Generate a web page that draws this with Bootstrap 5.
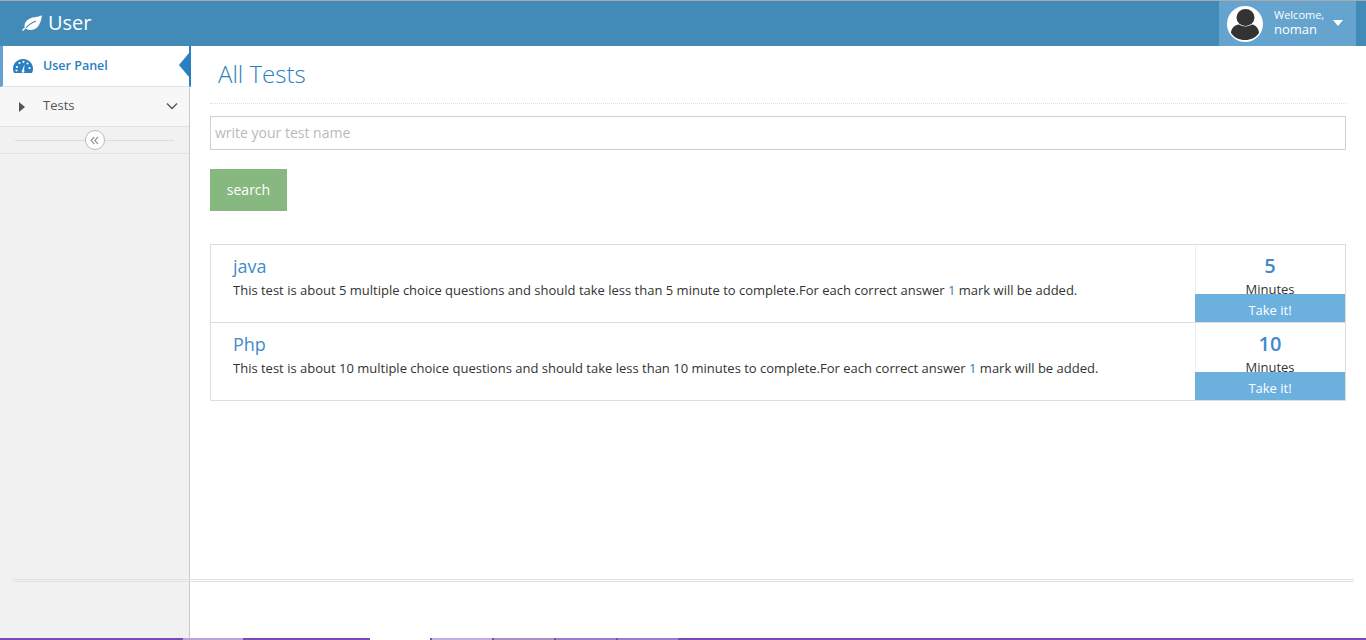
<!DOCTYPE html>
<html lang="en">
<head>
<meta charset="utf-8">
<title>User</title>
<link rel="stylesheet" href="https://cdn.jsdelivr.net/npm/bootstrap@5.3.0/dist/css/bootstrap.min.css">
<style>
html,body{height:100%;overflow:hidden}
body{font-family:"Open Sans","Noto Sans",sans-serif;font-size:13px;color:#333;background:#fff}
.shell{height:640px;position:relative}
.topline{height:1px;background:#aaa}
.hdr{height:45px;background:#428bb9;color:#fff}
.brand-t{font-size:20px;line-height:1;margin-left:6px;margin-top:-2px}
.brand-ic{margin-left:22px;margin-top:-2px}
.usr{width:137px;height:45px;background:#64a4cf;margin-right:10px;padding-left:8px}
.usr-av{width:36px;height:36px;border-radius:50%;background:#fff;flex:none}
.usr-w{font-size:11px;line-height:13px}
.usr-n{font-size:13px;line-height:15px;margin-top:1px}
.usr-txt{margin-left:11px;margin-top:-3px;width:60px}
.caretd{width:0;height:0;border-left:5.5px solid transparent;border-right:5.5px solid transparent;border-top:6px solid #fff;margin-left:-1px;margin-top:-2px}
.midrow{height:592px}
.side{width:190px;flex:none;background:#f1f1f1;border-right:1px solid #c9c9c9}
.sitem{height:40px;border-bottom:1px solid #e2e2e2;font-size:13px}
.sitem.on{height:41px;background:#fff;border-left:3px solid #65a0d0;color:#2a7fc0;font-weight:600;position:relative;font-size:12.5px;margin-right:-2px;border-right:2px solid #2a7fc0}
.sitem.on::after{content:"";position:absolute;right:0;top:7px;border-top:12px solid transparent;border-bottom:12px solid transparent;border-right:10px solid #2a7fc0}
.sitem.tst{background:#f7f7f7;color:#555}
.tst-lbl{padding-bottom:2px}
.sic{width:20px;margin-right:10px;flex:none}
.sic-g{margin-left:10px}
.sic-t{margin-left:13px}
.chev{margin-right:11px;margin-bottom:2px}
.scol{height:27px;border-bottom:1px solid #e2e2e2;padding:0 15px}
.scol-l{flex:1;height:1px;background:#ddd}
.scol-b{width:20px;height:20px;border-radius:50%;border:1px solid #bbb;background:#fff;flex:none}
.pagew{padding:0 20px;min-width:0}
.ttl{font-size:24px;font-weight:300;color:#2a7fc0;margin:0;line-height:28px;padding:14px 8px 15px}
.ttl-wrap{border-bottom:1px dotted #ddd;height:58px}
.qin{height:34px;border:1px solid #d0d0d0;border-radius:0;margin-top:12px;padding:0 4px 2px;font-size:14px;color:#333}
.qin::placeholder{color:#bdb9b6;opacity:1}
.btn-sr{background:#87b87f;color:#fff;border:0;border-radius:0;width:77px;height:42px;font-size:14px;margin-top:19px;padding:0 0 2px}
.btn-sr:hover{background:#87b87f;color:#fff}
.tlist{margin-top:33px;border:1px solid #ddd;border-bottom:0}
.trow{height:78px;border-bottom:1px solid #ddd}
.tmain{padding:7px 22px 0;min-width:0}
.tname{font-size:18px;color:#428bca;line-height:28px;font-weight:400}
.tdesc{font-size:13px;line-height:18px;margin-top:1px;color:#333;white-space:nowrap}
.tdesc b{font-weight:400;color:#3a7ab0}
.tside{width:150px;flex:none;text-align:center;position:relative;overflow:hidden;background:linear-gradient(#f0f0f0,#f0f0f0) left top/1px 100% no-repeat}
.tnum{font-size:20px;font-weight:600;color:#428bca;line-height:28px;margin-top:7px}
.tmin{font-size:13px;line-height:18px}
.ttake{position:absolute;left:0;right:0;bottom:0;height:28px;background:#6cb0de;color:#fff;font-size:13px;line-height:33px;text-decoration:none}
.rule{position:absolute;left:12px;right:12px;top:579px;height:3px;border-top:1px solid #e2e2e2;border-bottom:1px solid #e2e2e2}
.task{height:2px;background:#7a4bb5}
.tb{height:2px;width:60px;flex:none}
.tb-a{margin-left:183px;background:#b9a4d9}
.tb-b{margin-left:127px;background:#fff}
.tb-c{margin-left:2px;background:#c0aee0}
.tb-d{margin-left:2px;background:#a78fc8}
.tb-e{margin-left:2px;background:#9c7ccc}
</style>
</head>
<body>
<div class="shell d-flex flex-column">
  <div class="topline"></div>
  <header class="hdr d-flex align-items-center justify-content-between">
    <div class="d-flex align-items-center">
      <svg class="brand-ic" width="20" height="16" viewBox="0 0 20 16" aria-hidden="true"><path fill="#fff" d="M20 0C18 2 13 1.500 9 3 4 5 1.500 9 3 13c4 3.500 11 2.500 14-3 2-3 2.500-7 3-10z"/><path fill="none" stroke="#428bb9" stroke-width="1.200" d="M3 14C6 10 10 7.500 14 6"/><path fill="none" stroke="#fff" stroke-width="1.500" d="M.5 15.500L3.500 12.500"/></svg>
      <span class="brand-t">User</span>
    </div>
    <div class="usr d-flex align-items-center">
      <div class="usr-av d-flex align-items-center justify-content-center">
        <svg width="32" height="32" viewBox="0 0 32 32" aria-hidden="true"><ellipse cx="16.500" cy="9.500" rx="9" ry="8.500" fill="#333"/><path fill="#333" d="M2 25c0-5 4-8 8-8.500 4 2.500 9 2.500 13 0 3 .5 7 3.500 7 8.500-3 4.500-8 7-14 7S5 29.500 2 25z"/></svg>
      </div>
      <div class="usr-txt"><div class="usr-w">Welcome,</div><div class="usr-n">noman</div></div>
      <div class="caretd"></div>
    </div>
  </header>
  <div class="midrow d-flex flex-grow-1">
    <aside class="side">
      <div class="sitem on d-flex align-items-center">
        <svg class="sic sic-g" width="20" height="16" viewBox="0 0 20 16" aria-hidden="true"><path fill="#2a7fc0" d="M10 1C4.500 1 0 5.400 0 10.800c0 1.500.4 2.900 1 4.200h18c.6-1.300 1-2.700 1-4.200C20 5.400 15.500 1 10 1z"/><g fill="#fff"><circle cx="4" cy="9" r="1.100"/><circle cx="6.500" cy="5" r="1.100"/><circle cx="10.500" cy="3.800" r="1.100"/><circle cx="14.500" cy="5.500" r="1.100"/><circle cx="16.500" cy="10" r="1.100"/><circle cx="3.500" cy="12.500" r="1.100"/><path d="M11.500 6.500l-.4 5.800a1.400 1.400 0 1 1-1.900-.1z"/></g></svg>
        <span>User Panel</span>
      </div>
      <div class="sitem tst d-flex align-items-center">
        <svg class="sic sic-t" width="20" height="12" viewBox="0 0 20 12" aria-hidden="true"><path fill="#555" d="M6 1l6 5-6 5z"/></svg>
        <span class="tst-lbl">Tests</span>
        <svg class="ms-auto chev" width="12" height="8" viewBox="0 0 12 8" aria-hidden="true"><path fill="none" stroke="#555" stroke-width="1.300" d="M1 1.500l5 5 5-5"/></svg>
      </div>
      <div class="scol d-flex align-items-center">
        <div class="scol-l"></div>
        <div class="scol-b d-flex align-items-center justify-content-center">
          <svg width="9" height="9" viewBox="0 0 9 9" aria-hidden="true"><path fill="none" stroke="#999" stroke-width="1.200" d="M4.300 1L1 4.500 4.300 8M8 1L4.700 4.500 8 8"/></svg>
        </div>
        <div class="scol-l"></div>
      </div>
    </aside>
    <main class="pagew flex-grow-1">
      <div class="ttl-wrap"><h1 class="ttl">All Tests</h1></div>
      <input class="form-control qin" type="text" placeholder="write your test name">
      <button class="btn btn-sr d-block" type="button">search</button>
      <div class="tlist">
        <div class="trow d-flex">
          <div class="tmain flex-grow-1">
            <div class="tname">java</div>
            <div class="tdesc">This test is about 5 multiple choice questions and should take less than 5 minute to complete.For each correct answer <b>1</b> mark will be added.</div>
          </div>
          <div class="tside">
            <div class="tnum">5</div>
            <div class="tmin">Minutes</div>
            <a class="ttake" href="#">Take it!</a>
          </div>
        </div>
        <div class="trow d-flex">
          <div class="tmain flex-grow-1">
            <div class="tname">Php</div>
            <div class="tdesc">This test is about 10 multiple choice questions and should take less than 10 minutes to complete.For each correct answer <b>1</b> mark will be added.</div>
          </div>
          <div class="tside">
            <div class="tnum">10</div>
            <div class="tmin">Minutes</div>
            <a class="ttake" href="#">Take it!</a>
          </div>
        </div>
      </div>
    </main>
  </div>
  <div class="rule"></div>
  <div class="task d-flex">
    <div class="tb tb-a"></div>
    <div class="tb tb-b"></div>
    <div class="tb tb-c"></div>
    <div class="tb tb-d"></div>
    <div class="tb tb-e"></div>
    <div class="tb tb-e"></div>
  </div>
</div>
<script src="https://cdn.jsdelivr.net/npm/bootstrap@5.3.0/dist/js/bootstrap.bundle.min.js"></script>
</body>
</html>
